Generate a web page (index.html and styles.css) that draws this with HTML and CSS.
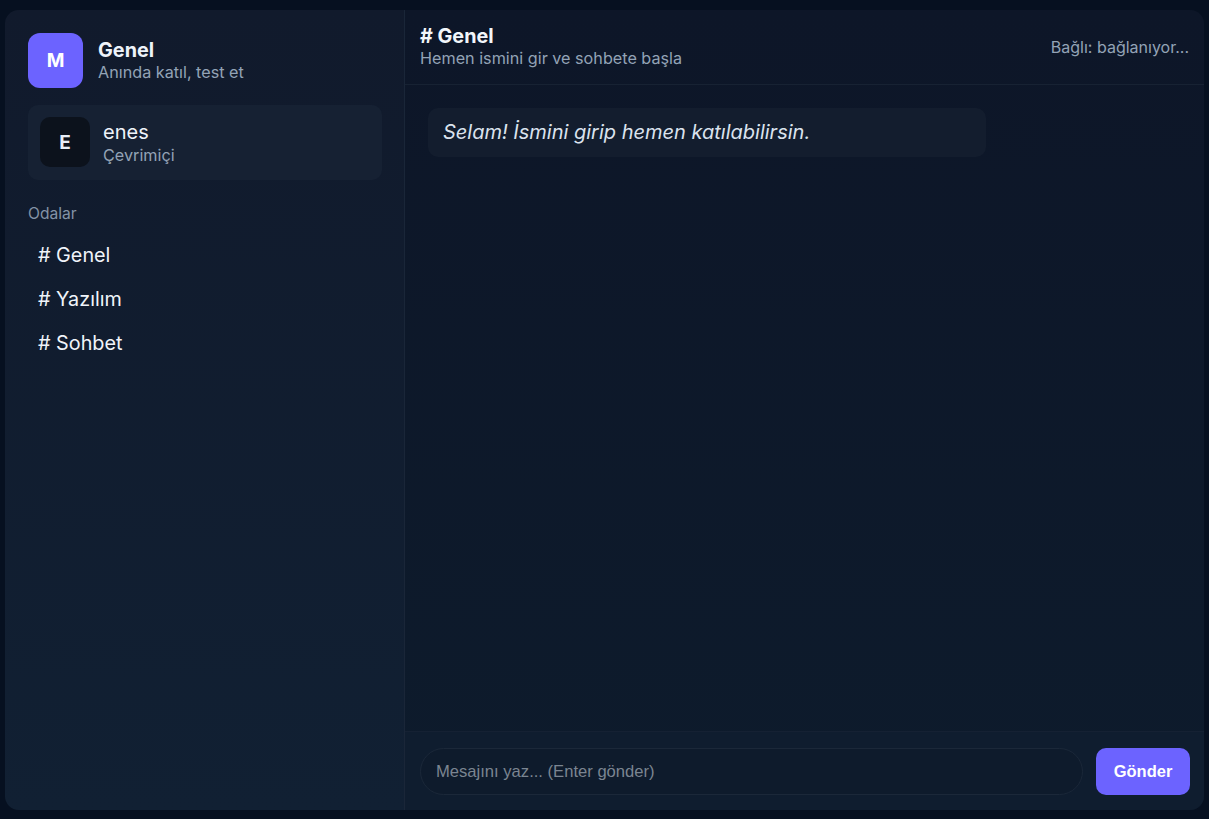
FILE: index.html
```html
<!DOCTYPE html>
<html lang="tr">
<head>
<meta charset="utf-8">
<title>Genel</title>
<link rel="stylesheet" href="styles.css">
</head>
<body>
<div class="app">
  <aside class="sidebar">
    <div class="brand">
      <div class="brand-avatar">M</div>
      <div class="brand-text">
        <div class="brand-title">Genel</div>
        <div class="brand-sub">Anında katıl, test et</div>
      </div>
    </div>
    <div class="user-card">
      <div class="user-avatar">E</div>
      <div class="user-text">
        <div class="user-name">enes</div>
        <div class="user-status">Çevrimiçi</div>
      </div>
    </div>
    <div class="section-label">Odalar</div>
    <nav class="rooms">
      <div class="room"># Genel</div>
      <div class="room"># Yazılım</div>
      <div class="room"># Sohbet</div>
    </nav>
  </aside>
  <main class="chat">
    <header class="chat-header">
      <div class="chat-title-block">
        <div class="chat-title"># Genel</div>
        <div class="chat-sub">Hemen ismini gir ve sohbete başla</div>
      </div>
      <div class="chat-status">Bağlı: bağlanıyor...</div>
    </header>
    <section class="messages">
      <div class="bubble">Selam! İsmini girip hemen katılabilirsin.</div>
    </section>
    <footer class="composer">
      <input class="msg-input" type="text" placeholder="Mesajını yaz... (Enter gönder)">
      <button class="send-btn">Gönder</button>
    </footer>
  </main>
</div>
</body>
</html>
```

FILE: styles.css
```css
* { box-sizing: border-box; }
html, body { height: 100%; }
body {
  margin: 0;
  background: #061020;
  font-family: Inter, "Noto Sans", sans-serif;
  color: #e6edf6;
}
.app {
  height: 100%;
  padding: 10px 5px 9px 5px;
  display: flex;
}
.sidebar {
  width: 400px;
  flex: 0 0 400px;
  background: linear-gradient(180deg, #111a2c 0%, #112033 100%);
  border-right: 1px solid #1a2638;
  border-radius: 14px 0 0 14px;
  padding: 23px 22px 23px 23px;
  display: flex;
  flex-direction: column;
}
.brand { display: flex; align-items: center; gap: 15px; }
.brand-avatar {
  width: 55px; height: 55px;
  border-radius: 12px;
  background: #6c63ff;
  color: #fff;
  font-weight: 700;
  font-size: 19px;
  display: flex; align-items: center; justify-content: center;
}
.brand-title { font-weight: 700; font-size: 19.8px; line-height: 22px; color: #eef3fa; }
.brand-sub { font-size: 16.2px; line-height: 22px; color: #93a3b6; }
.user-card {
  margin-top: 17px;
  background: #162133;
  border-radius: 10px;
  padding: 12px 12px 13px 12px;
  display: flex; align-items: center; gap: 13px;
}
.user-avatar {
  width: 50px; height: 50px;
  border-radius: 10px;
  background: #0c121c;
  color: #e8eef7;
  font-weight: 700;
  font-size: 19px;
  display: flex; align-items: center; justify-content: center;
}
.user-name { font-size: 20px; line-height: 24px; color: #eef3fa; margin-top: 1px; }
.user-status { font-size: 16.2px; line-height: 22px; color: #93a3b6; }
.section-label {
  margin-top: 24px;
  font-size: 15.6px;
  line-height: 20px;
  color: #8393a6;
}
.rooms { margin-top: 9px; display: flex; flex-direction: column; }
.room {
  padding: 10px 10px;
  font-size: 19.8px;
  line-height: 24px;
  color: #f0f4fa;
  border-radius: 8px;
}
.chat {
  flex: 1;
  display: flex;
  flex-direction: column;
  background: linear-gradient(180deg, #0d1628 0%, #0d1b2c 100%);
  border-radius: 0 14px 14px 0;
  overflow: hidden;
}
.chat-header {
  height: 75px;
  padding: 0 14px 0 15px;
  display: flex;
  align-items: center;
  justify-content: space-between;
  border-bottom: 1px solid #172233;
}
.chat-title { font-weight: 700; font-size: 19.8px; line-height: 22px; color: #f2f6fb; }
.chat-sub { font-size: 16.2px; line-height: 22px; color: #93a3b6; }
.chat-status { font-size: 16px; color: #93a3b6; margin-right: 1px; }
.messages {
  flex: 1;
  padding: 23px;
}
.bubble {
  width: 558px;
  background: #131d2e;
  border-radius: 10px;
  padding: 12px 15px 13px 15px;
  font-size: 20px;
  line-height: 24px;
  font-style: italic;
  color: #dbe3ee;
}
.composer {
  border-top: 1px solid #152133;
  background: #0f1d2f;
  padding: 16px 14px 15px 15px;
  display: flex;
  gap: 13px;
}
.msg-input {
  flex: 1;
  height: 47px;
  border-radius: 24px;
  border: 1px solid #1b2839;
  background: #0e1b2c;
  padding: 0 15px;
  font-family: "Liberation Sans", Arial, sans-serif;
  font-size: 16.6px;
  color: #e6edf6;
  outline: none;
}
.msg-input::placeholder { color: #7b8591; }
.send-btn {
  width: 94px;
  height: 47px;
  border: none;
  border-radius: 10px;
  background: #6c63ff;
  color: #fff;
  font-family: "Liberation Sans", Arial, sans-serif;
  font-weight: 700;
  font-size: 16.5px;
}
```
